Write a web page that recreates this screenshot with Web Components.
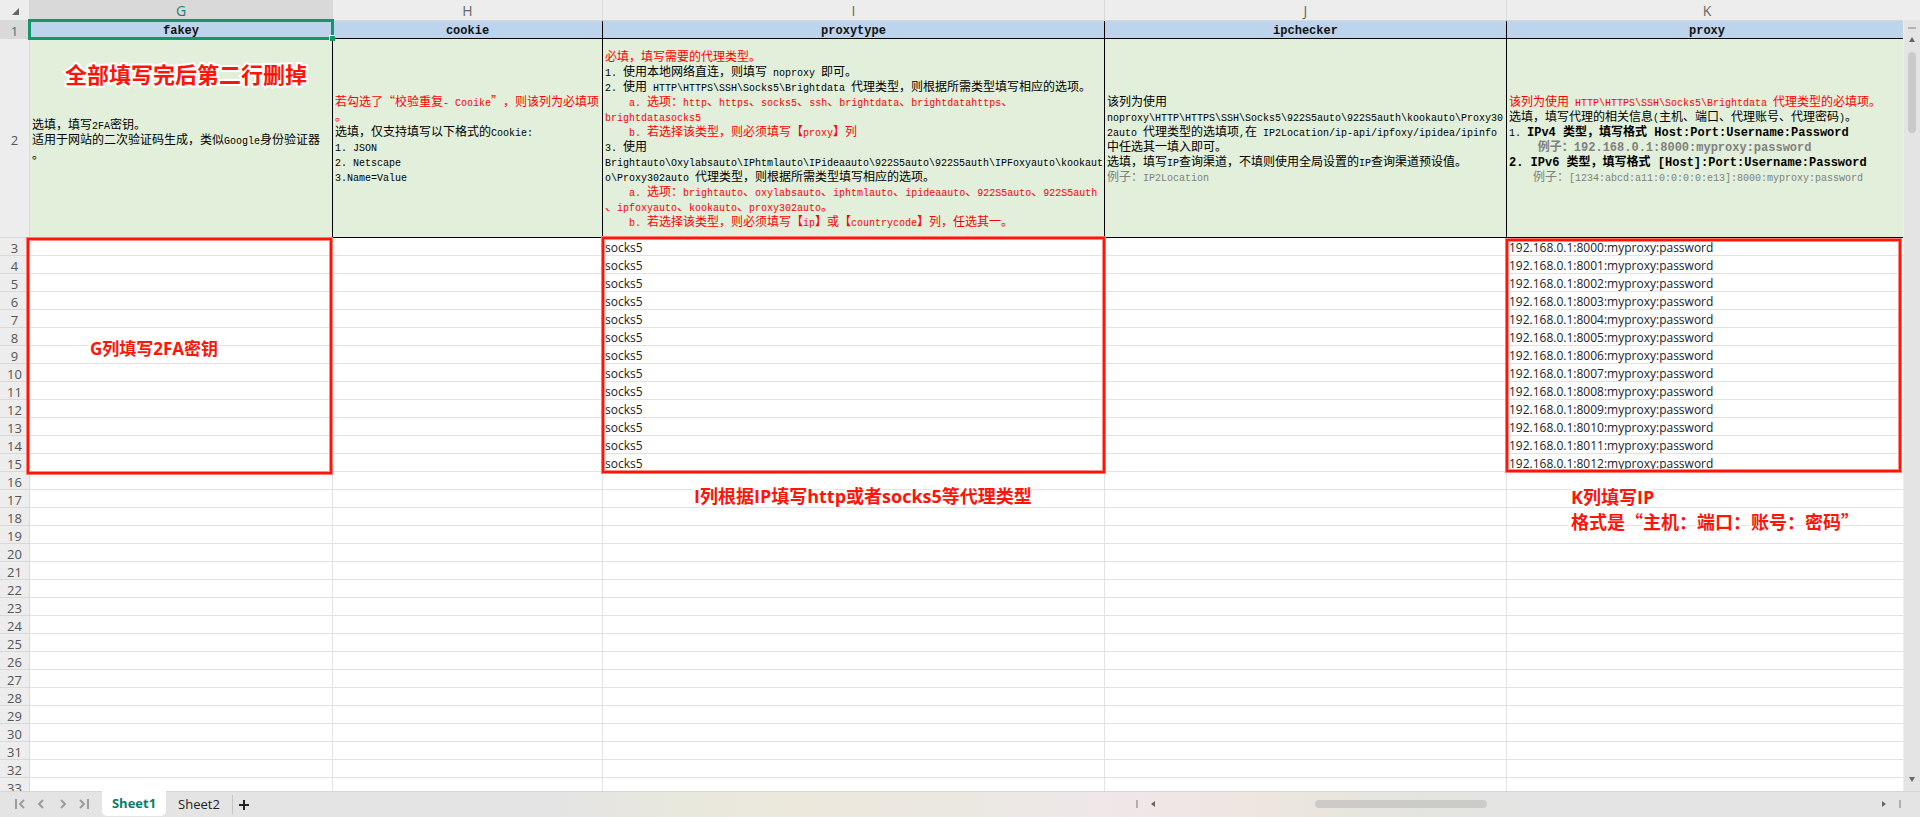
<!DOCTYPE html>
<html lang="zh-CN">
<head>
<meta charset="utf-8">
<title>Sheet1</title>
<style>
body { margin: 0; font-family: "Open Sans", "Noto Sans CJK SC", sans-serif; text-spacing-trim: space-all; }
</style>
</head>
<body>
<sheet-app></sheet-app>
<script>
const h = s => s.replace(/&/g, '&amp;').replace(/</g, '&lt;');
/* Latin runs use a half-width monospace face next to full-width Chinese. */
const mix = s => h(s).replace(/[\x20-\x7e]+/g, m => `<span class="l">${m}</span>`);

class MixedText extends HTMLElement {
  connectedCallback() {
    const lines = JSON.parse(this.getAttribute('lines'));
    this.attachShadow({ mode: 'open' }).innerHTML = `<style>
      :host { display: block; font: 12px/15px "Noto Sans CJK SC", sans-serif; color: #000; white-space: pre; }
      .l { font-family: "Liberation Mono", monospace; font-size: 10px; }
      .b { font-weight: 700; }
      .b .l, .b.l { font-size: 12px; }
      p { margin: 0; height: 15px; }
      .r { color: #f00; } .g { color: #808080; }
    </style>` + lines.map(parts => '<p>' + parts.map(([c, t]) => `<span class="${c}">${mix(t)}</span>`).join('') + '</p>').join('');
  }
}
customElements.define('mixed-text', MixedText);

class RedNote extends HTMLElement {
  connectedCallback() {
    this.attachShadow({ mode: 'open' }).innerHTML = `<style>
      :host { position: absolute; z-index: 3; color: #ff1408; font: 700 18px/24px "Open Sans", "Noto Sans CJK SC", sans-serif;
        white-space: pre; -webkit-text-stroke: 4px #fff; paint-order: stroke fill; }
    </style><slot></slot>`;
  }
}
customElements.define('red-note', RedNote);

class RedBox extends HTMLElement {
  connectedCallback() {
    this.attachShadow({ mode: 'open' }).innerHTML = `<style>
      :host { position: absolute; z-index: 2; box-sizing: border-box; border: 2px solid #ff1408; pointer-events: none;
        box-shadow: 0 0 0 1px #ff7a72, inset 0 0 0 1px #ff8a84; }
    </style>`;
  }
}
customElements.define('red-box', RedBox);

const K = '', R = 'r', G = 'g', B = 'b';
const notes = [
  [[[K, '选填，填写2FA密钥。']], [[K, '适用于网站的二次验证码生成，类似Google身份验证器']], [[K, '。']]],
  [[[R, '若勾选了“校验重复- Cooike”，则该列为必填项']], [[R, '。']], [[K, '选填，仅支持填写以下格式的Cookie:']],
   [[K, '1. JSON']], [[K, '2. Netscape']], [[K, '3.Name=Value']]],
  [[[R, '必填，填写需要的代理类型。']],
   [[K, '1. 使用本地网络直连，则填写 noproxy 即可。']],
   [[K, '2. 使用 HTTP\\HTTPS\\SSH\\Socks5\\Brightdata 代理类型，则根据所需类型填写相应的选项。']],
   [[R, '    a. 选项：http、https、socks5、ssh、brightdata、brightdatahttps、']],
   [[R, 'brightdatasocks5']],
   [[R, '    b. 若选择该类型，则必须填写【proxy】列']],
   [[K, '3. 使用']],
   [[K, 'Brightauto\\Oxylabsauto\\IPhtmlauto\\IPideaauto\\922S5auto\\922S5auth\\IPFoxyauto\\kookaut']],
   [[K, 'o\\Proxy302auto 代理类型，则根据所需类型填写相应的选项。']],
   [[R, '    a. 选项：brightauto、oxylabsauto、iphtmlauto、ipideaauto、922S5auto、922S5auth']],
   [[R, '、ipfoxyauto、kookauto、proxy302auto。']],
   [[R, '    b. 若选择该类型，则必须填写【ip】或【countrycode】列，任选其一。']]],
  [[[K, '该列为使用']],
   [[K, 'noproxy\\HTTP\\HTTPS\\SSH\\Socks5\\922S5auto\\922S5auth\\kookauto\\Proxy30']],
   [[K, '2auto 代理类型的选填项,在 IP2Location/ip-api/ipfoxy/ipidea/ipinfo']],
   [[K, '中任选其一填入即可。']],
   [[K, '选填，填写IP查询渠道，不填则使用全局设置的IP查询渠道预设值。']],
   [[G, '例子：IP2Location']]],
  [[[R, '该列为使用 HTTP\\HTTPS\\SSH\\Socks5\\Brightdata 代理类型的必填项。']],
   [[K, '选填，填写代理的相关信息(主机、端口、代理账号、代理密码)。']],
   [[K, '1. '], [B, 'IPv4 类型，填写格式 Host:Port:Username:Password']],
   [['b g', '    例子：192.168.0.1:8000:myproxy:password']],
   [[B, '2. IPv6 类型，填写格式 [Host]:Port:Username:Password']],
   [[G, '    例子：[1234:abcd:a11:0:0:0:0:e13]:8000:myproxy:password']]]
];

class SheetGrid extends HTMLElement {
  connectedCallback() {
    const letters = ['G', 'H', 'I', 'J', 'K'];
    const heads = ['fakey', 'cookie', 'proxytype', 'ipchecker', 'proxy'];
    const cell = (r, c) => c === 2 && r <= 15 ? 'socks5' : c === 4 && r <= 15 ? `192.168.0.1:${7997 + r}:myproxy:password` : '';
    let rows = '';
    for (let r = 3; r <= 33; r++)
      rows += `<tr><th scope="row">${r}</th>${letters.map((_, c) => `<td>${cell(r, c)}</td>`).join('')}</tr>`;
    this.attachShadow({ mode: 'open' }).innerHTML = `<style>
      :host { display: block; position: relative; overflow: hidden; background: #fff; }
      table { width: 100%; table-layout: fixed; border-collapse: separate; border-spacing: 0; }
      .n { width: 30px; } .g { width: 303px; } .h { width: 270px; } .i { width: 502px; } .j { width: 402px; }
      th, td { box-sizing: border-box; padding: 3px 0 0; border: 0 solid #e2e2e2; border-width: 0 1px 1px 0; height: 18px;
        font-size: 12px; line-height: 14px; white-space: nowrap; text-align: left; }
      td { padding-left: 2px; color: #222; }
      thead th { height: 21px; padding-top: 2px; line-height: 18px; font-weight: 400; font-size: 14px; color: #666; background: #ededed;
        text-align: center; border-color: #d8d8d8; }
      tbody th { font-weight: 400; font-size: 13px; color: #555; background: #ededed; text-align: center; border-color: #d8d8d8; }
      thead th.on, tbody th.on { background: #d9d9d9; color: #19806c; }
      thead th:last-child, td:last-child { border-right: 0; }
      .name td { background: #bdd4ec; border-color: #000; text-align: center; padding: 3px 0 0; line-height: 14px;
        font-family: "Liberation Mono", monospace; font-weight: 700; color: #111; }
      thead th:last-child, .name td:last-child { padding-left: 4px; }
      .help td { background: #e2efda; border-color: #000; vertical-align: middle; height: 199px; padding-top: 0; }
      .help th { height: 199px; }
      .corner svg { display: block; margin: 0 0 0 12px; }
      .pick { position: absolute; left: 28px; top: 19px; width: 306px; height: 21px; box-sizing: border-box; border: 3px solid #12966a; }
      .pick::after { content: ""; position: absolute; right: -4px; bottom: -4px; width: 5px; height: 5px; background: #12966a; border: 1px solid #fff; border-width: 1px 0 0 1px; }
      .bg { left: 27px; top: 238px; width: 305px; height: 236px; }
      .bi { left: 602px; top: 237px; width: 503px; height: 236px; }
      .bk { left: 1506px; top: 239px; right: 2px; height: 233px; }
      .t1 { left: 65px; top: 58px; font-size: 22px; line-height: 32px; }
      .t2 { left: 90px; top: 337px; font-size: 17px; }
      .t3 { left: 694px; top: 484px; }
      .t4 { left: 1571px; top: 485px; }
      .t4 span { font-family: "Noto Sans CJK SC", sans-serif; }
    </style>
    <table>
      <colgroup><col class="n"><col class="g"><col class="h"><col class="i"><col class="j"><col></colgroup>
      <thead><tr><th class="corner"><svg width="9" height="9" viewBox="0 0 9 9"><path d="M7 1v7H0z" fill="#666"/></svg></th>
        ${letters.map((l, i) => `<th scope="col"${i ? '' : ' class="on"'}>${l}</th>`).join('')}</tr></thead>
      <tbody>
        <tr class="name"><th scope="row" class="on">1</th>${heads.map(t => `<td>${t}</td>`).join('')}</tr>
        <tr class="help"><th scope="row">2</th>${notes.map(() => '<td><mixed-text></mixed-text></td>').join('')}</tr>
        ${rows}
      </tbody>
    </table>
    <div class="pick"></div>
    <red-box class="bg"></red-box><red-box class="bi"></red-box><red-box class="bk"></red-box>
    <red-note class="t1">全部填写完后第二行删掉</red-note>
    <red-note class="t2">G列填写2FA密钥</red-note>
    <red-note class="t3">I列根据IP填写http或者socks5等代理类型</red-note>
    <red-note class="t4">K列填写IP<br><span>格式是“主机：端口：账号：密码”</span></red-note>`
      .replace(/<mixed-text>/g, (() => { let i = 0; return () => `<mixed-text lines="${h(JSON.stringify(notes[i++])).replace(/"/g, '&quot;')}">`; })());
  }
}
customElements.define('sheet-grid', SheetGrid);

class SideScroll extends HTMLElement {
  connectedCallback() {
    this.attachShadow({ mode: 'open' }).innerHTML = `<style>
      :host { display: flex; flex-direction: column; align-items: center; background: #e4e4e4; box-sizing: border-box; border-top: 20px solid #ededed; border-left: 1px solid #ededed; }
      i { width: 8px; height: 2px; background: #b4b4b4; margin-top: 7px; }
      button { border: 0; padding: 0; background: none; width: 8px; height: 6px; display: flex; justify-content: center; }
      .up { margin-top: 8px; } .down { margin: auto 0 8px; }
      b { width: 8px; height: 81px; border-radius: 4px; background: #cacaca; margin-top: 9px; }
    </style>
    <i></i><button class="up" aria-label="上"><svg width="6" height="5"><path d="M3 0l3 5H0z" fill="#666"/></svg></button><b></b>
    <button class="down" aria-label="下"><svg width="6" height="5"><path d="M3 5L0 0h6z" fill="#666"/></svg></button>`;
  }
}
customElements.define('side-scroll', SideScroll);

class TabBar extends HTMLElement {
  connectedCallback() {
    const nav = (label, d) => `<button class="nav" aria-label="${label}"><svg width="12" height="12" viewBox="0 0 12 12" fill="none" stroke="#9c9c9c" stroke-width="2"><path d="${d}"/></svg></button>`;
    this.attachShadow({ mode: 'open' }).innerHTML = `<style>
      :host { display: flex; align-items: stretch; height: 26px; box-sizing: border-box; border-top: 1px solid #d6d6d6;
        background: linear-gradient(90deg, #e4e4e4 29%, #e9e8dc 36%, #ece8dc 42%, #ebe8e2 51%, #eee7e8 56%, #f0e6e6 61%, #ebe6de 67%, #e4e4df 74%, #e4e4e4 80%); }
      button { border: 0; padding: 0; margin: 0; background: none; font: 13px/22px "Open Sans", sans-serif; color: #222; }
      svg { display: block; }
      .navs { display: flex; gap: 10px; padding-left: 13px; width: 89px; }
      .nav { width: 12px; padding-bottom: 1px; }
      .tab { height: 25px; width: 64px; padding-bottom: 2px; }
      .on { background: #fff; border-radius: 0 0 5px 5px; margin-top: -1px; color: #0c7d68; font-weight: 700; }
      .two { margin: 0 1px; }
      .add { border-left: 1px solid #c4c4c4; margin: 3px 0; padding-left: 6px; }
      .bar { margin-left: auto; width: 765px; display: flex; align-items: center; margin-right: 19px; padding-bottom: 1px; }
      .bar i { width: 2px; height: 8px; background: #b0b0b0; }
      .l { margin-left: 13px; } .r { margin: 0 13px 0 auto; }
      .thumb { width: 172px; height: 8px; border-radius: 4px; background: #cccbc7; margin-left: 160px; }
    </style>
    <div class="navs">${nav('首个', 'M3 1v10M11 2L7 6l4 4')}${nav('上一个', 'M8 2L4 6l4 4')}${nav('下一个', 'M4 2l4 4-4 4')}${nav('末个', 'M1 2l4 4-4 4M9 1v10')}</div>
    <button class="tab on">Sheet1</button><button class="tab two">Sheet2</button>
    <button class="add" aria-label="添加"><svg width="10" height="10" viewBox="0 0 10 10" stroke="#222" stroke-width="2"><path d="M5 0v10M0 5h10"/></svg></button>
    <div class="bar"><i></i><button class="l" aria-label="左"><svg width="4" height="6"><path d="M4 0v6L0 3z" fill="#666"/></svg></button>
    <div class="thumb"></div><button class="r" aria-label="右"><svg width="4" height="6"><path d="M0 0v6l4-3z" fill="#666"/></svg></button><i></i></div>`;
  }
}
customElements.define('tab-bar', TabBar);

class SheetApp extends HTMLElement {
  connectedCallback() {
    this.attachShadow({ mode: 'open' }).innerHTML = `<style>
      :host { display: flex; flex-direction: column; height: 100vh; overflow: hidden; }
      main { flex: 1; min-height: 0; display: flex; }
      sheet-grid { flex: 1; min-width: 0; }
      side-scroll { width: 17px; }
    </style><main><sheet-grid></sheet-grid><side-scroll></side-scroll></main><tab-bar></tab-bar>`;
  }
}
customElements.define('sheet-app', SheetApp);
</script>
</body>
</html>
